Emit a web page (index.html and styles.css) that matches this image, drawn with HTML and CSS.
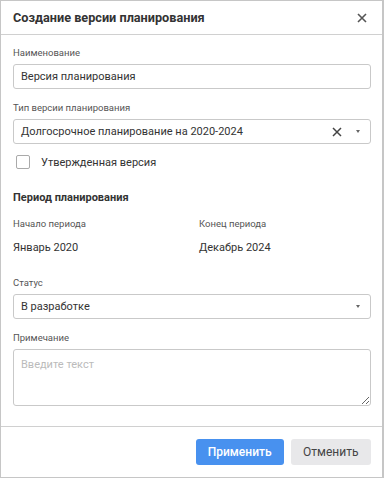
FILE: index.html
```html
<!DOCTYPE html>
<html lang="ru">
<head>
  <meta charset="UTF-8">
  <meta name="viewport" content="width=device-width,initial-scale=1.0">
  <title>Создание версии планирования</title>
  <link rel="stylesheet" href="styles.css">
</head>
<body>

  <div class="dialog">
    <div class="dlg-head">
      <h1>Создание версии планирования</h1>
      <button class="close" aria-label="close">
        <svg width="10" height="10" viewBox="0 0 10 10"><path d="M1 1L9 9M9 1L1 9" stroke="#555" stroke-width="1.6"/></svg>
      </button>
    </div>

    <div class="dlg-body">
      <div class="field">
        <label>Наименование</label>
        <div class="input">Версия планирования</div>
      </div>

      <div class="field">
        <label>Тип версии планирования</label>
        <div class="input select">
          <span class="val">Долгосрочное планирование на 2020-2024</span>
          <svg class="clear" width="10" height="10" viewBox="0 0 10 10"><path d="M1 1L9 9M9 1L1 9" stroke="#444" stroke-width="1.5"/></svg>
          <span class="caret"></span>
        </div>
      </div>

      <label class="check"><span class="box"></span>Утвержденная версия</label>

      <h2>Период планирования</h2>
      <div class="period">
        <div>
          <label>Начало периода</label>
          <p>Январь 2020</p>
        </div>
        <div>
          <label>Конец периода</label>
          <p>Декабрь 2024</p>
        </div>
      </div>

      <div class="field">
        <label>Статус</label>
        <div class="input select">
          <span class="val">В разработке</span>
          <span class="caret"></span>
        </div>
      </div>

      <div class="field">
        <label>Примечание</label>
        <textarea placeholder="Введите текст"></textarea>
      </div>
    </div>

    <div class="dlg-foot">
      <button class="btn primary">Применить</button>
      <button class="btn">Отменить</button>
    </div>
  </div>

</body>
</html>
```

FILE: styles.css
```css
*{box-sizing:border-box;margin:0;padding:0}
body{
  font-family:Roboto,"Noto Sans",sans-serif;
  color:#333;
  background:#fff;
}
/* dialog frame */
.dialog{
  width:384px;
  height:478px;
  border:1px solid #c6c6c6;
  border-right-width:2px;
  display:flex;
  flex-direction:column;
}
.dlg-head{
  height:34px;
  border-bottom:1px solid #d0d0d0;
  display:flex;
  align-items:center;
  justify-content:space-between;
  padding:0 12px 0 12px;
}
h1{font-size:12.7px;font-weight:700;color:#333}
.close{
  border:none;background:none;width:16px;height:16px;
  display:flex;align-items:center;justify-content:center;
}
/* body */
.dlg-body{
  flex:1;
  padding:12px 11px 0 12px;
}
.field{margin-bottom:13px}
label{
  display:block;
  font-size:9.5px;
  color:#555;
  margin-bottom:6px;
}
.input{
  height:25px;
  border:1px solid #c9c9c9;
  border-radius:3px;
  font-size:11px;
  padding:0 7px;
  display:flex;
  align-items:center;
  color:#333;
}
.select .val{flex:1}
.select .clear{margin-right:14px}
.caret{
  width:0;height:0;
  border-left:2.5px solid transparent;
  border-right:2.5px solid transparent;
  border-top:3px solid #666;
  margin-right:3px;
}
/* checkbox */
.check{
  display:flex;
  align-items:center;
  font-size:11px;
  color:#333;
  margin:-2px 0 0 3px;
}
.check .box{
  width:14px;height:14px;
  border:1px solid #aaa;
  border-radius:2px;
  margin-right:11px;
}
h2{
  font-size:11px;
  font-weight:700;
  color:#333;
  margin:22px 0 14px;
}
/* period */
.period{
  display:grid;
  grid-template-columns:186px 1fr;
  margin-bottom:23px;
}
.period label{margin-bottom:12px}
.period p{font-size:11px;color:#333}
textarea{
  display:block;
  width:100%;
  height:57px;
  border:1px solid #c9c9c9;
  border-radius:3px;
  padding:8px 7px;
  font-family:inherit;
  font-size:11px;
  color:#333;
  resize:vertical;
}
textarea::placeholder{color:#bbb}
/* footer */
.dlg-foot{
  height:51px;
  border-top:1px solid #d0d0d0;
  display:flex;
  justify-content:flex-end;
  align-items:center;
  gap:7px;
  padding:0 11px 0 0;
}
.btn{
  height:26px;
  border:none;
  border-radius:3px;
  padding:0 12.5px;
  font-family:inherit;
  font-size:12px;
  background:#e8e8ea;
  color:#444;
}
.btn.primary{
  padding:0 12px;
  background:#4891ef;
  color:#fff;
  font-weight:500;
}
```
